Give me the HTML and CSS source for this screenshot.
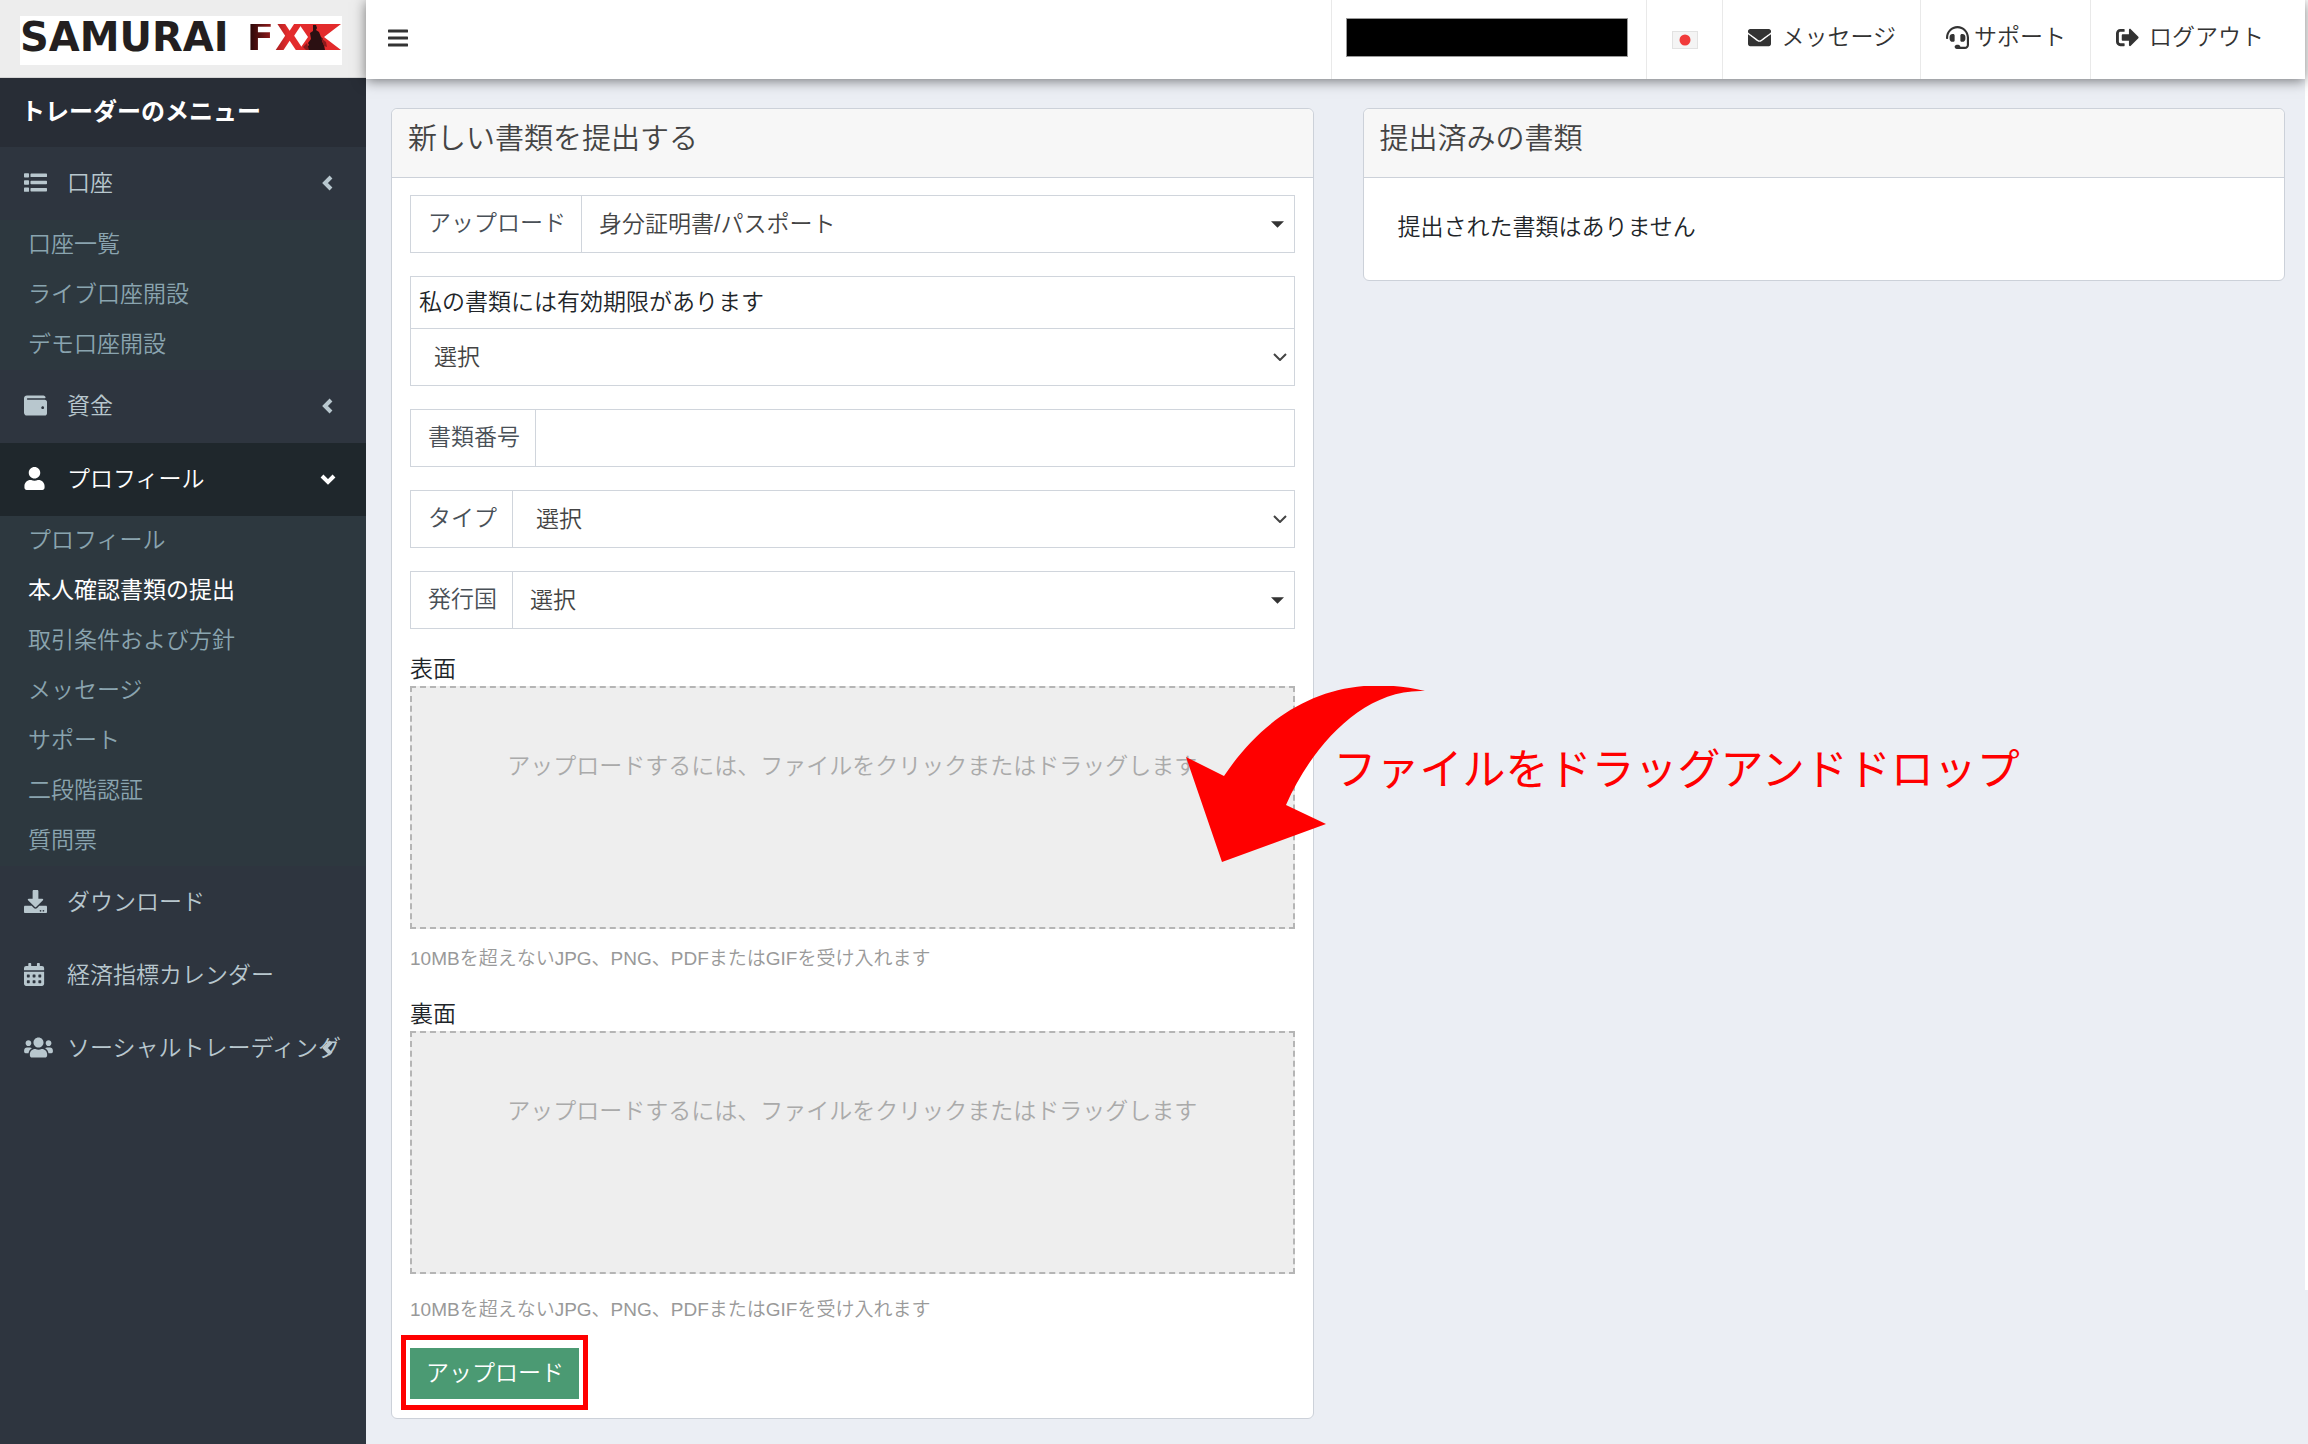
FILE: index.html
```html
<!DOCTYPE html>
<html lang="ja">
<head>
<meta charset="utf-8">
<meta name="viewport" content="width=device-width, initial-scale=1">
<title>本人確認書類の提出 | SAMURAI FX</title>
<link rel="stylesheet" href="styles.css">
</head>
<body>
<div class="app">
  <aside class="sidebar">
    <a class="brand" href="#">
      <span class="brand-plate">
        <span class="brand-name">SAMURAI</span>
        <span class="brand-fx">FX</span>
        <svg class="brand-art" width="42" height="26" viewBox="0 0 42 26" aria-hidden="true">
          <path d="M0 0H42L25 13L42 26H0L9 13Z" fill="#e32b2c"/>
          <path d="M14 1l3 0 1 3-1 2 3 2 2 5 2 2-1 2 2 4 1 5H7l1-3 2-2-1-2 3-4-1-6 3-2z" fill="#2b1012"/>
          <path d="M22 14l5 4 1 5-3-1zM8 19l-4 4 3 3h3z" fill="#8d1a1c"/>
        </svg>
      </span>
    </a>
    <h2 class="menu-title">トレーダーのメニュー</h2>
    <nav>
      <a class="menu-item" href="#">
        <svg class="icon" viewBox="0 0 512 512" aria-hidden="true"><path d="M16 48h80q16 0 16 16v64q0 16-16 16H16q-16 0-16-16V64q0-16 16-16zM16 208h80q16 0 16 16v64q0 16-16 16H16q-16 0-16-16v-64q0-16 16-16zM16 368h80q16 0 16 16v64q0 16-16 16H16q-16 0-16-16v-64q0-16 16-16zM160 56h336q16 0 16 16v48q0 16-16 16H160q-16 0-16-16V72q0-16 16-16zM160 216h336q16 0 16 16v48q0 16-16 16H160q-16 0-16-16v-48q0-16 16-16zM160 376h336q16 0 16 16v48q0 16-16 16H160q-16 0-16-16v-48q0-16 16-16z"/></svg>
        <span>口座</span>
        <svg class="chevron" viewBox="0 0 16 16" aria-hidden="true"><path d="M11 2L5 8l6 6"/></svg>
      </a>
      <ul class="submenu">
        <li><a href="#">口座一覧</a></li>
        <li><a href="#">ライブ口座開設</a></li>
        <li><a href="#">デモ口座開設</a></li>
      </ul>
      <a class="menu-item" href="#">
        <svg class="icon" viewBox="0 0 512 512" aria-hidden="true"><path d="M461.200 128H80c-8.840 0-16-7.160-16-16s7.160-16 16-16h384c8.840 0 16-7.160 16-16 0-26.510-21.490-48-48-48H64C28.650 32 0 60.650 0 96v320c0 35.350 28.650 64 64 64h397.200c28.020 0 50.800-21.530 50.800-48V176c0-26.470-22.780-48-50.800-48zM416 336c-17.670 0-32-14.330-32-32s14.330-32 32-32 32 14.330 32 32-14.330 32-32 32z"/></svg>
        <span>資金</span>
        <svg class="chevron" viewBox="0 0 16 16" aria-hidden="true"><path d="M11 2L5 8l6 6"/></svg>
      </a>
      <a class="menu-item menu-item-open" href="#">
        <svg class="icon icon-user" viewBox="0 0 448 512" aria-hidden="true"><path d="M224 256c70.700 0 128-57.300 128-128S294.700 0 224 0 96 57.300 96 128s57.300 128 128 128zm89.600 32h-16.700c-22.200 10.200-46.900 16-72.900 16s-50.600-5.800-72.900-16h-16.700C60.200 288 0 348.200 0 422.400V464c0 26.500 21.500 48 48 48h352c26.500 0 48-21.500 48-48v-41.600c0-74.200-60.200-134.400-134.400-134.400z"/></svg>
        <span>プロフィール</span>
        <svg class="chevron" viewBox="0 0 16 16" aria-hidden="true"><path d="M2 5l6 6 6-6"/></svg>
      </a>
      <ul class="submenu">
        <li><a href="#">プロフィール</a></li>
        <li><a class="current" href="#" aria-current="page">本人確認書類の提出</a></li>
        <li><a href="#">取引条件および方針</a></li>
        <li><a href="#">メッセージ</a></li>
        <li><a href="#">サポート</a></li>
        <li><a href="#">二段階認証</a></li>
        <li><a href="#">質問票</a></li>
      </ul>
      <a class="menu-item" href="#">
        <svg class="icon" viewBox="0 0 512 512" aria-hidden="true"><path d="M216 0h80c13.300 0 24 10.700 24 24v168h87.700c17.800 0 26.700 21.500 14.100 34.100L269.700 378.300c-7.500 7.500-19.800 7.500-27.300 0L90.100 226.100c-12.600-12.600-3.700-34.100 14.100-34.100H192V24c0-13.300 10.700-24 24-24zm296 376v112c0 13.300-10.700 24-24 24H24c-13.300 0-24-10.700-24-24V376c0-13.300 10.700-24 24-24h146.700l49 49c20.100 20.100 52.500 20.100 72.600 0l49-49H488c13.300 0 24 10.700 24 24zm-124 88c0-11-9-20-20-20s-20 9-20 20 9 20 20 20 20-9 20-20zm64 0c0-11-9-20-20-20s-20 9-20 20 9 20 20 20 20-9 20-20z"/></svg>
        <span>ダウンロード</span>
      </a>
      <a class="menu-item" href="#">
        <svg class="icon" viewBox="0 0 448 512" preserveAspectRatio="xMinYMid" aria-hidden="true"><path d="M0 464c0 26.500 21.500 48 48 48h352c26.500 0 48-21.500 48-48V192H0zm320-196q0-12 12-12h40q12 0 12 12v40q0 12-12 12h-40q-12 0-12-12zm0 128q0-12 12-12h40q12 0 12 12v40q0 12-12 12h-40q-12 0-12-12zM192 268q0-12 12-12h40q12 0 12 12v40q0 12-12 12h-40q-12 0-12-12zm0 128q0-12 12-12h40q12 0 12 12v40q0 12-12 12h-40q-12 0-12-12zM64 268q0-12 12-12h40q12 0 12 12v40q0 12-12 12H76q-12 0-12-12zm0 128q0-12 12-12h40q12 0 12 12v40q0 12-12 12H76q-12 0-12-12zM400 64h-48V16q0-16-16-16h-32q-16 0-16 16v48H160V16q0-16-16-16h-32Q96 0 96 16v48H48Q0 64 0 112v48h448v-48q0-48-48-48z" fill-rule="evenodd"/></svg>
        <span>経済指標カレンダー</span>
      </a>
      <a class="menu-item" href="#">
        <svg class="icon icon-users" viewBox="0 0 640 512" aria-hidden="true"><path d="M96 224c35.300 0 64-28.700 64-64s-28.700-64-64-64-64 28.700-64 64 28.700 64 64 64zm448 0c35.300 0 64-28.700 64-64s-28.700-64-64-64-64 28.700-64 64 28.700 64 64 64zm32 32h-64c-17.600 0-33.500 7.100-45.100 18.600 40.300 22.100 68.900 62 75.100 109.400h66c17.700 0 32-14.300 32-32v-32c0-35.300-28.700-64-64-64zm-256 0c61.900 0 112-50.100 112-112S381.900 32 320 32 208 82.100 208 144s50.100 112 112 112zm76.800 32h-8.300c-20.800 10-43.900 16-68.500 16s-47.600-6-68.500-16h-8.300C179.600 288 128 339.600 128 403.200V432c0 26.500 21.500 48 48 48h288c26.500 0 48-21.500 48-48v-28.800c0-63.600-51.600-115.200-115.200-115.200zm-223.700-13.400C161.500 263.100 145.600 256 128 256H64c-35.300 0-64 28.700-64 64v32c0 17.700 14.300 32 32 32h65.900c6.300-47.400 34.900-87.300 75.200-109.400z"/></svg>
        <span>ソーシャルトレーディング</span>
        <svg class="chevron" viewBox="0 0 16 16" aria-hidden="true"><path d="M11 2L5 8l6 6"/></svg>
      </a>
    </nav>
  </aside>

  <div class="page">
    <header class="topbar">
      <button class="menu-toggle" type="button" aria-label="メニュー">
        <svg width="20" height="18" viewBox="0 0 20 18" aria-hidden="true"><path d="M1 2H19M1 9H19M1 16H19" stroke="#333" stroke-width="3" stroke-linecap="round"/></svg>
      </button>
      <div class="topbar-cell account"><span class="account-mask"></span></div>
      <a class="topbar-cell language" href="#" aria-label="日本語">
        <svg width="26" height="18" viewBox="0 0 26 18" aria-hidden="true"><rect x=".5" y=".5" width="25" height="17" fill="#f4f4f4" stroke="#e2e2e2"/><circle cx="13" cy="9" r="5.500" fill="#f13a3a"/></svg>
      </a>
      <a class="topbar-cell" href="#">
        <svg class="icon" viewBox="0 0 512 512" aria-hidden="true"><path d="M502.300 190.800c3.900-3.100 9.700-.2 9.700 4.700V400c0 26.500-21.500 48-48 48H48c-26.500 0-48-21.500-48-48V195.600c0-5 5.700-7.800 9.700-4.700 22.400 17.400 52.100 39.500 154.100 113.600 21.100 15.400 56.700 47.800 92.200 47.600 35.700.3 72-32.800 92.300-47.600 102-74.100 131.600-96.300 154-113.700zM256 320c23.200.4 56.600-29.200 73.400-41.400 132.700-96.300 142.800-104.700 173.400-128.700 5.800-4.500 9.200-11.500 9.200-18.900v-19c0-26.500-21.500-48-48-48H48c-26.500 0-48 21.500-48 48v19c0 7.400 3.400 14.300 9.200 18.900 30.600 23.900 40.700 32.400 173.400 128.700 16.800 12.200 50.200 41.800 73.400 41.400z"/></svg>
        メッセージ
      </a>
      <a class="topbar-cell topbar-support" href="#">
        <svg class="icon" viewBox="0 0 512 512" aria-hidden="true"><path d="M192 208c0-17.670-14.330-32-32-32h-16c-35.350 0-64 28.650-64 64v48c0 35.350 28.650 64 64 64h16c17.670 0 32-14.330 32-32V208zm176 144c35.350 0 64-28.650 64-64v-48c0-35.350-28.650-64-64-64h-16c-17.670 0-32 14.330-32 32v112c0 17.670 14.330 32 32 32h16zM256 0C113.180 0 4.580 118.830 0 256v16c0 8.840 7.160 16 16 16h16c8.840 0 16-7.160 16-16v-16c0-114.690 93.310-208 208-208s208 93.310 208 208h-.12c.08 2.430.12 165.720.12 165.720 0 23.350-18.930 42.280-42.280 42.280H320c0-26.510-21.490-48-48-48h-32c-26.510 0-48 21.490-48 48s21.490 48 48 48h181.720c49.860 0 90.280-40.420 90.280-90.280V256C507.420 118.830 398.820 0 256 0z"/></svg>
        サポート
      </a>
      <a class="topbar-cell topbar-logout" href="#">
        <svg class="icon" viewBox="0 0 512 512" aria-hidden="true"><path d="M497 273L329 441c-15 15-41 4.500-41-17v-96H152c-13.300 0-24-10.700-24-24v-96c0-13.300 10.700-24 24-24h136V88c0-21.400 25.900-32 41-17l168 168c9.300 9.400 9.300 24.600 0 34zM192 436v-40c0-6.600-5.400-12-12-12H96c-17.700 0-32-14.300-32-32V160c0-17.700 14.300-32 32-32h84c6.600 0 12-5.400 12-12V76c0-6.600-5.400-12-12-12H96c-53 0-96 43-96 96v192c0 53 43 96 96 96h84c6.600 0 12-5.400 12-12z"/></svg>
        ログアウト
      </a>
    </header>

    <main class="content">
      <section class="card">
        <h1 class="card-title">新しい書類を提出する</h1>
        <form class="card-form">
          <div class="field">
            <label for="doc-kind">アップロード</label>
            <div class="select">
              <select id="doc-kind"><option>身分証明書/パスポート</option></select>
              <svg class="caret" viewBox="0 0 12 6" aria-hidden="true"><path d="M0 0H12L6 6Z"/></svg>
            </div>
          </div>
          <div class="field field-stacked">
            <label for="doc-expiry">私の書類には有効期限があります</label>
            <div class="select select-native">
              <select id="doc-expiry"><option>選択</option></select>
              <svg class="arrow" viewBox="0 0 14 8" aria-hidden="true"><path d="M1 1l6 6 6-6"/></svg>
            </div>
          </div>
          <div class="field">
            <label for="doc-number">書類番号</label>
            <input id="doc-number" type="text">
          </div>
          <div class="field">
            <label for="doc-type">タイプ</label>
            <div class="select select-native">
              <select id="doc-type"><option>選択</option></select>
              <svg class="arrow" viewBox="0 0 14 8" aria-hidden="true"><path d="M1 1l6 6 6-6"/></svg>
            </div>
          </div>
          <div class="field">
            <label for="doc-country">発行国</label>
            <div class="select">
              <select id="doc-country"><option>選択</option></select>
              <svg class="caret" viewBox="0 0 12 6" aria-hidden="true"><path d="M0 0H12L6 6Z"/></svg>
            </div>
          </div>

          <div class="upload">
            <h3>表面</h3>
            <div class="drop-anchor">
              <button class="dropzone" type="button">アップロードするには、ファイルをクリックまたはドラッグします</button>
              <svg class="callout-arrow" width="240" height="176" viewBox="0 0 240 176" aria-hidden="true"><path d="M239 5C150-16 82 24 38 90L0 71L36 176L140 138L100 119C125 62 176 2 239 5Z" fill="#f00"/></svg>
              <p class="callout-text">ファイルをドラッグアンドドロップ</p>
            </div>
            <p class="hint">10MBを超えないJPG、PNG、PDFまたはGIFを受け入れます</p>
          </div>
          <div class="upload upload-last">
            <h3>裏面</h3>
            <button class="dropzone" type="button">アップロードするには、ファイルをクリックまたはドラッグします</button>
            <p class="hint">10MBを超えないJPG、PNG、PDFまたはGIFを受け入れます</p>
          </div>
          <button class="submit" type="submit">アップロード</button>
        </form>
      </section>

      <section class="card">
        <h2 class="card-title">提出済みの書類</h2>
        <p class="empty">提出された書類はありません</p>
      </section>
    </main>
  </div>
</div>
</body>
</html>
```
FILE: styles.css
```css
* { box-sizing: border-box; }

body {
  margin: 0;
  background: #ebeef4;
  color: #212529;
  font: 350 23px/34px "Liberation Sans", "Noto Sans CJK JP", sans-serif;
  overflow-x: hidden;
}

h1, h2, h3, p, ul { margin: 0; padding: 0; font-weight: inherit; }
ul { list-style: none; }
a { color: inherit; text-decoration: none; }
button, input, select { font: inherit; color: inherit; margin: 0; border-radius: 0; }

.app {
  display: grid;
  grid-template-columns: 366px minmax(0, 1fr);
  min-height: 100vh;
}

.icon { width: 23px; height: 23px; flex: none; fill: currentColor; }

/* Sidebar */
.sidebar { background: #2e353f; color: #b8c7ce; }

.brand {
  display: block;
  height: 78px;
  padding: 16px 20px 0;
  background: #ededed;
  border-bottom: 1px solid #d5d5d5;
}
.brand-plate {
  display: flex;
  align-items: flex-start;
  width: 322px;
  height: 49px;
  padding: 8px 1px 0 0;
  background: #fff;
  font: bold 40px/26px "DejaVu Sans", sans-serif;
}
.brand-name { color: #231f20; }
.brand-fx {
  margin-left: auto;
  background: linear-gradient(90deg, #1b0505, #e32b2c 70%);
  background-clip: text;
  color: transparent;
}
.brand-art { flex: none; margin-left: -6px; }

.menu-title {
  height: 69px;
  padding-left: 21px;
  background: #282d36;
  color: #fff;
  font-size: 24px;
  font-weight: bold;
  line-height: 67px;
}
.menu-item {
  position: relative;
  display: flex;
  align-items: center;
  height: 73px;
  padding: 0 0 2px 24px;
  white-space: nowrap;
}
.menu-item span { margin-left: 20px; }
.menu-item .icon-user { width: 21px; margin-right: 2px; }
.menu-item .icon-users { width: 29px; margin-right: -6px; }
.menu-item-open { background: #1f272c; color: #fff; }
.chevron {
  position: absolute;
  right: 30px;
  width: 16px;
  height: 16px;
  fill: none;
  stroke: currentColor;
  stroke-width: 4;
}
.submenu { background: #2d383f; color: #8aa4af; }
.submenu a { display: block; height: 50px; padding-left: 28px; line-height: 48px; }
.submenu .current { color: #fff; font-weight: 400; }

/* Top bar */
.page {
  background: linear-gradient(#fff, #fff) right top / 3px 1290px no-repeat;
  padding-right: 3px;
}
.topbar {
  position: relative;
  display: flex;
  height: 79px;
  background: #fff;
  color: #333;
  box-shadow: 0 2px 12px rgba(0, 0, 0, .5);
}
.menu-toggle {
  display: flex;
  align-items: center;
  margin-right: auto;
  padding: 0 22px 4px;
  border: 0;
  background: none;
}
.topbar-cell {
  display: flex;
  align-items: center;
  gap: 10px;
  padding: 0 24px 5px 25px;
  border-left: 1px solid #e9e9e9;
  white-space: nowrap;
}
.account { padding: 0 18px 4px 14px; }
.account-mask { width: 282px; height: 39px; background: #000; border: 1px solid #999; }
.language { padding: 0 24px 0 25px; }
.topbar-support { gap: 5px; }
.topbar-logout { padding-right: 41px; }

/* Cards */
.content {
  display: grid;
  grid-template-columns: 1fr 1fr;
  align-items: start;
  gap: 49px;
  padding: 29px 20px 26px 25px;
}
.card { background: #fff; border: 1px solid #ccd1d9; border-radius: 6px; }
.card-title {
  height: 69px;
  padding-left: 16px;
  background: #f7f7f7;
  border-bottom: 1px solid #ccd1d9;
  border-radius: 6px 6px 0 0;
  color: #444;
  font-size: 29px;
  line-height: 60px;
}
.empty { padding: 32px 34px 36px; }

/* Form */
.card-form {
  display: flex;
  flex-direction: column;
  gap: 23px;
  padding: 17px 18px 19px;
}
.field { display: flex; height: 58px; border: 1px solid #d0d5dc; color: #495057; }
.field label { padding: 0 15px 0 17px; border-right: 1px solid #d0d5dc; line-height: 54px; }
.field input { flex: 1; min-width: 0; padding: 0 17px; border: 0; background: none; }
.field-stacked { display: block; height: 110px; }
.field-stacked label {
  display: block;
  padding: 0 8px;
  border-right: 0;
  border-bottom: 1px solid #d0d5dc;
  color: #212529;
  line-height: 51px;
}
.select { display: grid; flex: 1; height: 56px; align-items: center; color: #444; }
.select select {
  grid-area: 1 / 1;
  width: 100%;
  height: 56px;
  padding: 0 40px 0 17px;
  border: 0;
  background: none;
  appearance: none;
}
.select-native select { padding-left: 23px; }
.select svg { grid-area: 1 / 1; justify-self: end; pointer-events: none; }
.caret { width: 13px; height: 7px; margin-right: 10px; fill: #333; }
.arrow { width: 14px; height: 8px; margin-right: 7px; fill: none; stroke: #444; stroke-width: 2; }

.upload h3 { font-size: 23px; line-height: 34px; }
.dropzone {
  display: block;
  width: 100%;
  height: 243px;
  padding: 0 0 84px;
  border: 2px dashed #b5b5b5;
  background: #eee;
  color: #aaa;
}
.hint { padding-top: 15px; color: #999; font-size: 19px; line-height: 30px; }
.upload-last .hint { padding-top: 21px; }
.drop-anchor { position: relative; }
.callout-arrow { position: absolute; top: 0; right: -131px; pointer-events: none; }
.callout-text {
  position: absolute;
  top: 52px;
  left: 100%;
  margin-left: 39px;
  color: #f00;
  font-size: 43px;
  font-weight: 400;
  line-height: 64px;
  white-space: nowrap;
}
.submit {
  position: relative;
  align-self: flex-start;
  height: 51px;
  padding: 0 15px 2px 16px;
  border: 0;
  background: #4b9a73;
  color: #fff;
}
.submit::after {
  content: "";
  position: absolute;
  inset: -13px -9px -11px;
  border: 5px solid #f00;
}
```
